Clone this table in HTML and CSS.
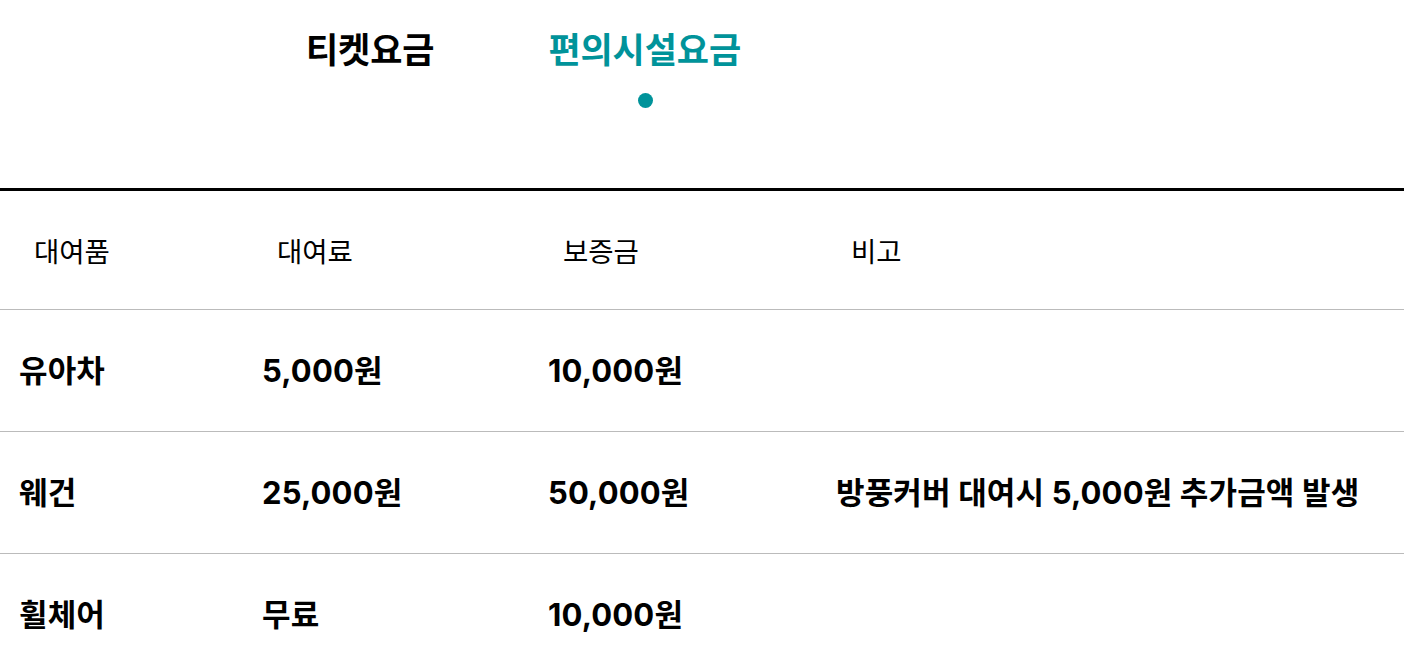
FILE: index.html
```html
<!DOCTYPE html>
<html lang="ko">
<head>
<meta charset="utf-8">
<link rel="stylesheet" href="styles.css">
</head>
<body>
<nav class="tabs">
  <div class="tab">티켓요금</div>
  <div class="tab active">편의시설요금</div>
</nav>
<div class="table">
  <div class="row head">
    <div class="cell">대여품</div>
    <div class="cell">대여료</div>
    <div class="cell">보증금</div>
    <div class="cell">비고</div>
  </div>
  <div class="row">
    <div class="cell">유아차</div>
    <div class="cell">5,000원</div>
    <div class="cell">10,000원</div>
    <div class="cell"></div>
  </div>
  <div class="row">
    <div class="cell">웨건</div>
    <div class="cell">25,000원</div>
    <div class="cell">50,000원</div>
    <div class="cell">방풍커버 대여시 5,000원 추가금액 발생</div>
  </div>
  <div class="row">
    <div class="cell">휠체어</div>
    <div class="cell">무료</div>
    <div class="cell">10,000원</div>
    <div class="cell"></div>
  </div>
</div>
</body>
</html>
```
FILE: styles.css
```css
* { box-sizing: border-box; }
html, body { margin: 0; padding: 0; background: #fff; }
body {
  font-family: "Inter", "Noto Sans CJK KR", sans-serif;
  color: #000;
  overflow: hidden;
}
.tabs {
  display: flex;
  gap: 114px;
  padding-left: 306px;
  height: 188px;
  padding-top: 22px;
}
.tab {
  font-size: 35px;
  font-weight: 700;
  line-height: 56px;
  letter-spacing: -0.1px;
  position: relative;
}
.tab.active { color: #00939a; }
.tab.active::after {
  content: "";
  position: absolute;
  left: 50%;
  top: 71px;
  width: 15px;
  height: 15px;
  margin-left: -7px;
  border-radius: 50%;
  background: #00939a;
}
.table { border-top: 3px solid #000; }
.row {
  display: grid;
  grid-template-columns: 243px 286px 288px 1fr;
  height: 122px;
  align-items: center;
  border-bottom: 1px solid #bbb;
}
.row.head { height: 119px; }
.row .cell {
  padding-left: 19px;
  font-size: 31px;
  font-weight: 700;
  letter-spacing: 0.15px;
  line-height: 1.2;
}
.row.head .cell {
  padding-left: 34px;
  font-family: "Noto Sans CJK KR", sans-serif;
  font-size: 27.5px;
  font-weight: 400;
  letter-spacing: 0;
}
```
